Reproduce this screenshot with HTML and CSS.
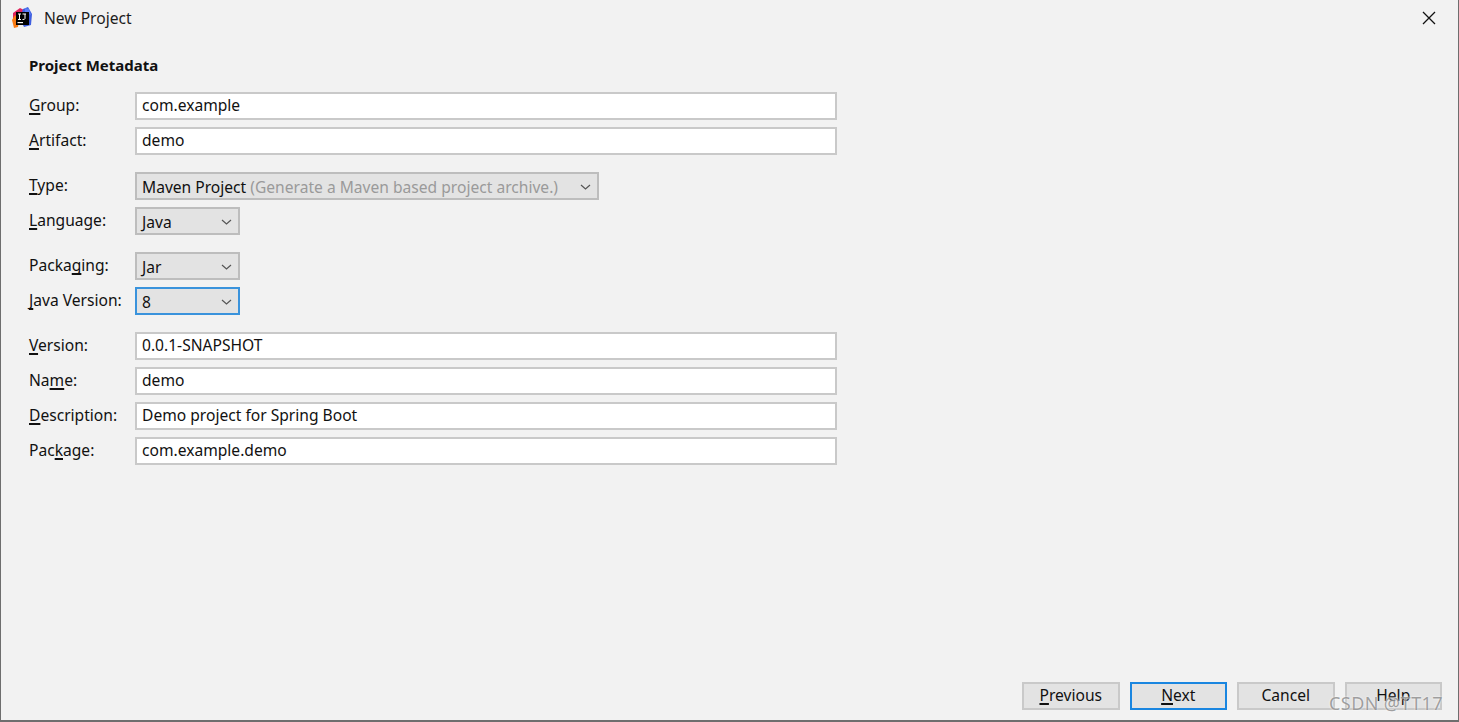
FILE: index.html
```html
<!DOCTYPE html>
<html lang="en">
    <head>
        <meta charset="UTF-8" />
        <meta name="viewport" content="width=device-width, initial-scale=1.0" />
        <title>New Project</title>
        <link rel="stylesheet" href="styles.css">
    </head>
    <body>
        <div class="window">
            <div class="titlebar">
                <svg class="app-icon" width="22" height="22" viewBox="0 0 22 22">
                    <path d="M2 6 L9 1 L13 3 L12 12 L5 20 L2 14 Z" fill="#e0245e" />
                    <path d="M1 13 L4 8 L8 12 L7 20 L3 21 Z" fill="#f97a12" />
                    <path d="M12 2 L17 0 L21 7 L20 18 L13 20 L9 12 Z" fill="#3f5fe0" />
                    <path d="M14 1 L18 2 L20 8 L14 5 Z" fill="#5a7ff5" />
                    <rect x="5" y="5" width="13" height="13" fill="#000" />
                    <rect x="6.5" y="15" width="5.5" height="1.2" fill="#fff" />
                    <path d="M7 7 H10 M8.5 7 V12.5 M7 12.5 H10 M11.5 7 H15 M14 7 V11.5 Q14 12.6 11.5 12.5" fill="none" stroke="#fff" stroke-width="1" />
                </svg>
                <span class="title">New Project</span>
                <svg class="close" width="14" height="14" viewBox="0 0 14 14">
                    <path d="M1 1 L13 13 M13 1 L1 13" stroke="#111" stroke-width="1.3" fill="none" />
                </svg>
            </div>

            <div class="content">
                <h1>Project Metadata</h1>

                <div class="group">
                    <div class="row">
                        <label><u>G</u>roup:</label>
                        <div class="input">com.example</div>
                    </div>
                    <div class="row">
                        <label><u>A</u>rtifact:</label>
                        <div class="input">demo</div>
                    </div>
                </div>

                <div class="group">
                    <div class="row">
                        <label><u>T</u>ype:</label>
                        <div class="select select-wide">
                            <span>Maven Project <span class="hint">(Generate a Maven based project archive.)</span></span>
                            <svg class="chevron" width="11" height="6" viewBox="0 0 11 6"><path d="M1 1 L5.5 5 L10 1" /></svg>
                        </div>
                    </div>
                    <div class="row">
                        <label><u>L</u>anguage:</label>
                        <div class="select">
                            <span>Java</span>
                            <svg class="chevron" width="11" height="6" viewBox="0 0 11 6"><path d="M1 1 L5.5 5 L10 1" /></svg>
                        </div>
                    </div>
                </div>

                <div class="group">
                    <div class="row">
                        <label>Packa<u>g</u>ing:</label>
                        <div class="select">
                            <span>Jar</span>
                            <svg class="chevron" width="11" height="6" viewBox="0 0 11 6"><path d="M1 1 L5.5 5 L10 1" /></svg>
                        </div>
                    </div>
                    <div class="row">
                        <label><u>J</u>ava Version:</label>
                        <div class="select focused">
                            <span>8</span>
                            <svg class="chevron" width="11" height="6" viewBox="0 0 11 6"><path d="M1 1 L5.5 5 L10 1" /></svg>
                        </div>
                    </div>
                </div>

                <div class="group">
                    <div class="row">
                        <label><u>V</u>ersion:</label>
                        <div class="input">0.0.1-SNAPSHOT</div>
                    </div>
                    <div class="row">
                        <label>Na<u>m</u>e:</label>
                        <div class="input">demo</div>
                    </div>
                    <div class="row">
                        <label><u>D</u>escription:</label>
                        <div class="input">Demo project for Spring Boot</div>
                    </div>
                    <div class="row">
                        <label>Pac<u>k</u>age:</label>
                        <div class="input">com.example.demo</div>
                    </div>
                </div>
            </div>

            <div class="footer">
                <button class="button"><u>P</u>revious</button>
                <button class="button default"><u>N</u>ext</button>
                <button class="button">Cancel</button>
                <button class="button">Help</button>
            </div>

            <div class="watermark">CSDN @TT17</div>
        </div>
    </body>
</html>
```

FILE: styles.css
```css
* {
    box-sizing: border-box;
}
body {
    margin: 0;
    height: 722px;
    overflow: hidden;
    font-family: "Noto Sans", "Open Sans", sans-serif;
    font-size: 15.6px;
    color: #111;
    background-color: #f2f2f2;
}
u {
    text-decoration-thickness: 2px;
    text-underline-offset: 2px;
    text-decoration-skip-ink: none;
}
.window {
    position: relative;
    display: flex;
    flex-direction: column;
    height: 722px;
    border-left: 1px solid #6e6e6e;
    border-right: 1px solid #6e6e6e;
    border-bottom: 2px solid #6e6e6e;
}
.titlebar {
    display: flex;
    align-items: center;
    height: 35px;
    padding: 0 22px 0 10px;
}
.app-icon {
    margin-right: 11px;
}
.title {
    flex: 1;
    color: #1c1c1c;
}
.content {
    flex: 1;
    padding: 18px 0 0 28px;
}
h1 {
    margin: 0 0 15px;
    font-size: 15px;
    line-height: 24px;
    font-weight: 700;
}
.group {
    display: flex;
    flex-direction: column;
    gap: 7px;
    margin-bottom: 17px;
}
.row {
    display: flex;
    align-items: center;
    height: 28px;
}
label {
    width: 106px;
    padding-bottom: 2px;
}
.input {
    width: 702px;
    height: 28px;
    padding: 0 5px;
    line-height: 23px;
    background-color: #fff;
    border: 2px solid #c9c9c9;
}
.select {
    display: flex;
    align-items: center;
    justify-content: space-between;
    width: 105px;
    height: 28px;
    padding: 1px 6px 0 5px;
    background-color: #e3e3e3;
    border: 2px solid #bdbdbd;
}
.select-wide {
    width: 464px;
}
.select.focused {
    border-color: #3a93dc;
}
.hint {
    color: #9a9a9a;
}
.chevron {
    fill: none;
    stroke: #555;
    stroke-width: 1.2;
}
.footer {
    display: flex;
    justify-content: flex-end;
    gap: 10px;
    padding: 0 16px 10px 0;
}
.button {
    width: 97.5px;
    height: 28px;
    padding: 0 0 2px;
    font-family: inherit;
    font-size: 15.6px;
    color: #111;
    background-color: #e3e3e3;
    border: 2px solid #c9c9c9;
}
.button.default {
    border-color: #1a86e0;
}
.watermark {
    position: absolute;
    right: 15px;
    bottom: 5px;
    font-size: 18px;
    letter-spacing: 0.4px;
    color: rgba(130, 130, 130, 0.75);
    text-shadow: 0 0 2px #fff;
}
```
